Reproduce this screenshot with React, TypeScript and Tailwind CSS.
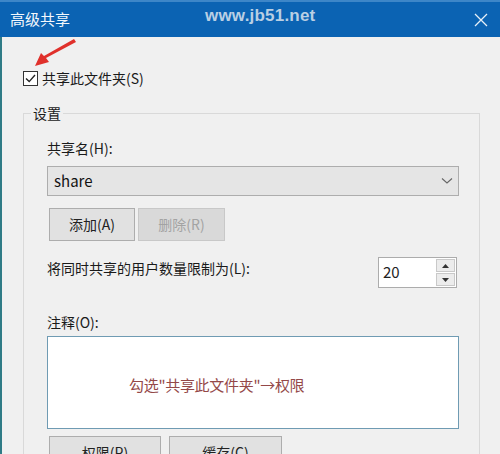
import React from "react";

const font = {
  fontFamily: '"Noto Sans CJK SC", "Noto Sans", "Liberation Sans", sans-serif',
};

function Checkbox() {
  return (
    <div className="flex h-[15px] w-[15px] items-center justify-center border border-[#333] bg-white">
      <svg width="13" height="13" viewBox="0 0 13 13">
        <path d="M2 6.5 L5.2 9.6 L11 3" fill="none" stroke="#222" strokeWidth="1.4" />
      </svg>
    </div>
  );
}

function Button({ label, disabled, className }: { label: string; disabled?: boolean; className: string }) {
  return (
    <div
      className={`flex h-[33px] items-center justify-center border text-[14px] ${
        disabled ? "border-[#c8c8c8] bg-[#d9d9d9] text-[#a3a3a3]" : "border-[#adadad] bg-[#e1e1e1] text-[#222]"
      } ${className}`}
    >
      {label}
    </div>
  );
}

export default function App() {
  return (
    <div className="relative h-[454px] w-[500px] overflow-hidden bg-[#f0f0f0]" style={font}>
      {/* title bar */}
      <div className="relative flex h-[37px] items-center border-t-2 border-[#3d86c8] bg-[#0b63b3] pl-[10px] text-[15px] text-[#f4f8fc]">
        <span>高级共享</span>
        <span
          className="absolute left-[205px] top-[1px] text-[17px] font-bold tracking-[0.2px] text-[#b9cfe4]"
          style={{ fontFamily: '"Liberation Sans", Arial, sans-serif' }}
        >
          www.jb51.net
        </span>
        <div className="ml-auto mr-[12px] flex items-center">
          <svg width="14" height="14" viewBox="0 0 14 14">
            <path d="M1 1 L13 13 M13 1 L1 13" stroke="#e8f0f8" strokeWidth="1.3" />
          </svg>
        </div>
      </div>

      {/* red arrow annotation */}
      <svg className="absolute left-0 top-0" width="100" height="80" viewBox="0 0 100 80">
        <polygon points="74,39 76,42 46,58 49,62 35,66 41,53 44,56" fill="#e0302b" />
      </svg>

      {/* body */}
      <div className="flex h-[417px] flex-col border-l-2 border-[#2f7b86] pl-[21px] pr-[20px] pt-[31px]">
        <div className="flex h-[20px] items-center gap-[4px] text-[14px] text-[#1a1a1a]">
          <Checkbox />
          <span>共享此文件夹(S)</span>
        </div>

        <div className="relative mt-[25px] flex-1 border border-[#d9d9d9] pl-[23px] pr-[20px] pt-[24px]">
          <span className="absolute left-[7px] top-[-11px] bg-[#f0f0f0] px-[2px] text-[14px] leading-[20px] text-[#1a1a1a]">
            设置
          </span>

          <div className="text-[14px] leading-[20px] text-[#1a1a1a]">共享名(H):</div>

          <div className="mt-[8px] flex h-[30px] items-center justify-between border border-[#adadad] bg-[#e5e5e5] pl-[6px] pr-[5px]">
            <span className="text-[15px] text-[#111]">share</span>
            <svg width="12" height="8" viewBox="0 0 12 8">
              <path d="M1 1.5 L6 6 L11 1.5" fill="none" stroke="#666" strokeWidth="1.1" />
            </svg>
          </div>

          <div className="mt-[12px] flex gap-[3px] pl-[2px]">
            <Button label="添加(A)" className="w-[86px]" />
            <Button label="删除(R)" disabled className="w-[87px]" />
          </div>

          <div className="mt-[16px] flex items-start justify-between">
            <span className="mt-[1px] text-[14px] leading-[20px] text-[#1a1a1a]">将同时共享的用户数量限制为(L):</span>
            <div className="mr-[2px] flex h-[31px] w-[79px] border border-[#acacac] bg-white">
              <span className="flex flex-1 items-center pl-[4px] text-[15px] text-[#222]">20</span>
              <div className="m-[1px] flex w-[19px] flex-col gap-[1px]">
                <div className="flex flex-1 items-center justify-center border border-[#c9c9c9] bg-[#ececec]">
                  <svg width="7" height="4" viewBox="0 0 7 4">
                    <path d="M0 4 L3.5 0 L7 4 Z" fill="#333" />
                  </svg>
                </div>
                <div className="flex flex-1 items-center justify-center border border-[#c9c9c9] bg-[#ececec]">
                  <svg width="7" height="4" viewBox="0 0 7 4">
                    <path d="M0 0 L3.5 4 L7 0 Z" fill="#333" />
                  </svg>
                </div>
              </div>
            </div>
          </div>

          <div className="mt-[24px] text-[14px] leading-[20px] text-[#1a1a1a]">注释(O):</div>

          <div className="mt-[4px] h-[93px] border border-[#6f9bb3] bg-white pl-[81px] pt-[35px]">
            <span className="text-[15px] leading-[20px] tracking-[-0.3px] text-[#944848]">勾选"共享此文件夹"→权限</span>
          </div>

          <div className="mt-[7px] flex gap-[8px] pl-[2px]">
            <Button label="权限(P)" className="w-[112px]" />
            <Button label="缓存(C)" className="w-[113px]" />
          </div>
        </div>
      </div>
    </div>
  );
}
